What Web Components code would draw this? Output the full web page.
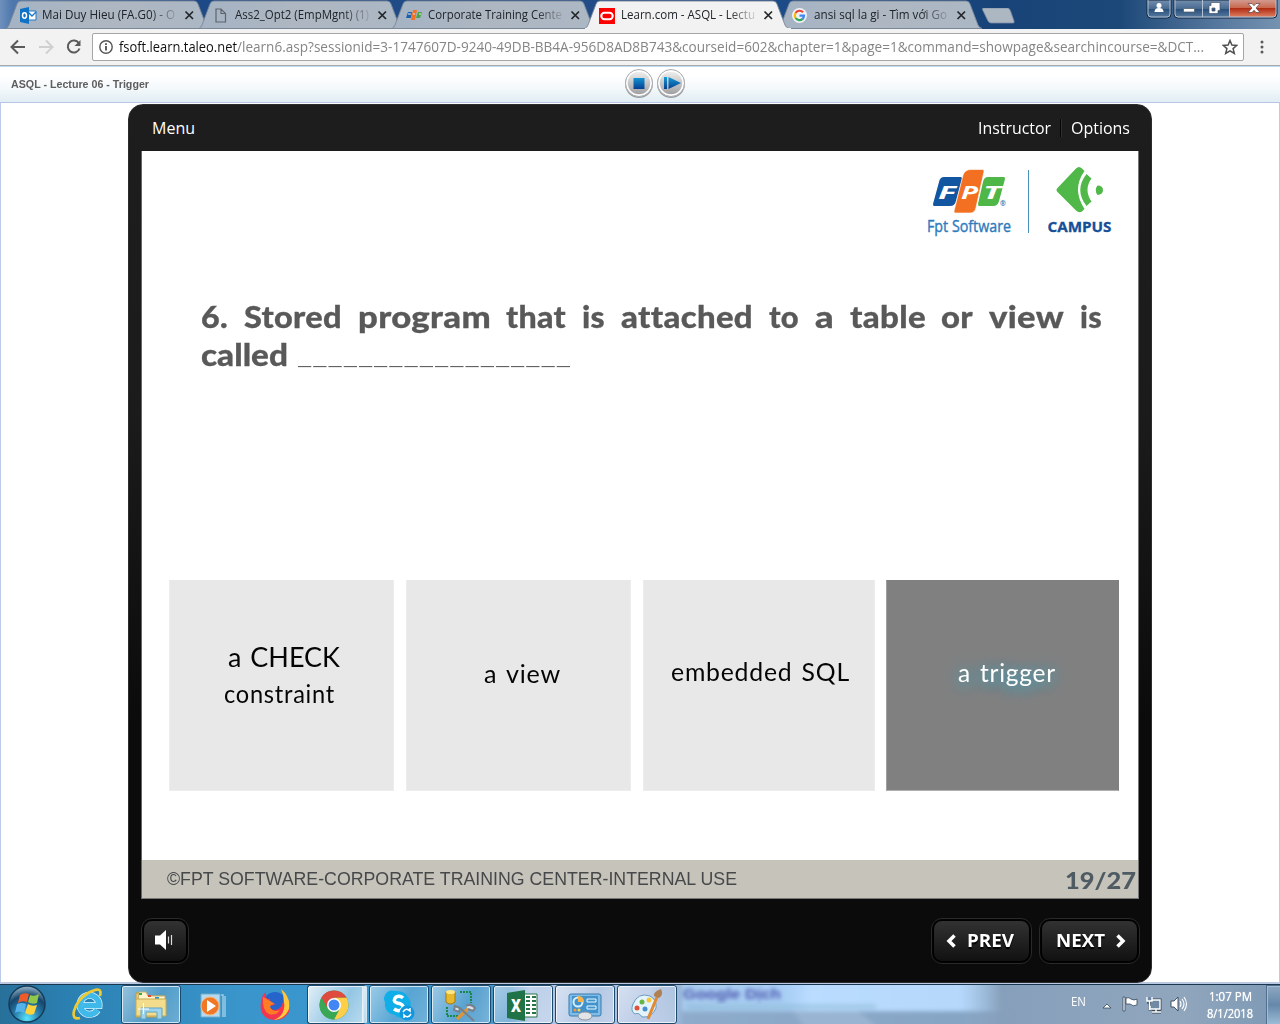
<!DOCTYPE html>
<html lang="en"><head><meta charset="utf-8"><title>ASQL - Lecture 06 - Trigger</title>
<style>
html,body{margin:0;padding:0}
body{width:1280px;height:1024px;overflow:hidden;display:flex;flex-direction:column;background:#fff;font-family:"Open Sans","Noto Sans",sans-serif}
</style></head><body>
<tab-strip>
 <browser-tab icon="outlook"><fit-text w="133">Mai Duy Hieu (FA.G0) - O</fit-text></browser-tab>
 <browser-tab icon="page"><fit-text w="134">Ass2_Opt2 (EmpMgnt) (1)</fit-text></browser-tab>
 <browser-tab icon="fpt"><fit-text w="134">Corporate Training Cente</fit-text></browser-tab>
 <browser-tab icon="oracle" active><fit-text w="134">Learn.com - ASQL - Lectu</fit-text></browser-tab>
 <browser-tab icon="google"><fit-text w="133">ansi sql la gi - Tìm với Go</fit-text></browser-tab>
</tab-strip>
<address-bar></address-bar>
<course-header><fit-text w="138">ASQL - Lecture 06 - Trigger</fit-text></course-header>
<course-player>
 <quiz-slide>
  <answer-card style="width:225px" dx="2"><fit-text w="112" style="font-size:27px;line-height:36px;letter-spacing:0">a CHECK</fit-text><fit-text w="111" style="line-height:36px;margin:0 8px 0 0">constraint</fit-text></answer-card>
  <answer-card style="width:225px;margin-left:12px"><fit-text w="77" style="margin-left:8px;margin-top:-4px">a view</fit-text></answer-card>
  <answer-card style="width:232px;margin-left:12px"><fit-text w="179" style="margin-left:3px;margin-top:-7px">embedded SQL</fit-text></answer-card>
  <answer-card selected style="width:233px;margin-left:11px"><fit-text w="98" style="margin-left:9px;margin-top:-6px">a trigger</fit-text></answer-card>
 </quiz-slide>
</course-player>
<task-bar></task-bar>
<script>
const define=(name,html,after)=>customElements.define(name,class extends HTMLElement{
  connectedCallback(){
    if(this.shadowRoot)return;
    const t=document.createElement('template');
    t.innerHTML=typeof html==='function'?html(this):html;
    this.attachShadow({mode:'open'}).append(t.content.cloneNode(true));
    if(after)after(this);
  }
});
const icons={
outlook:`<svg width="17" height="17" viewBox="0 0 17 17"><path d="M8 4h8v9H8z" fill="#fff" stroke="#1c78c8"/><path d="M8 5l4 4 4-4" fill="none" stroke="#1c78c8" stroke-width="1.4"/><path d="M0 2l9-2v17l-9-2z" fill="#0e72c6"/><ellipse cx="4.500" cy="8.500" rx="2" ry="2.700" fill="none" stroke="#fff" stroke-width="1.500"/></svg>`,
page:`<svg width="17" height="17" viewBox="0 0 17 17"><path d="M3 2h5l4.500 4.500v8.500H3zM8 2v4.500h4.500" fill="none" stroke="#5e646c" stroke-width="1.2"/></svg>`,
fpt:`<svg width="17" height="17" viewBox="0 0 17 17"><path d="M2 5h4l-1 6H0z" fill="#1c62ae"/><path d="M7 3h4l-2 10H5z" fill="#f37028"/><path d="M12 5h4l-2 6h-4z" fill="#4aa644"/><path d="M2 7h3M7 7h2M13 7h2" stroke="#e4e9f0"/></svg>`,
oracle:`<svg width="17" height="17" viewBox="0 0 17 17"><path d="M0 1h16v16H0z" fill="#f00"/><rect x="2.300" y="5.800" width="11.400" height="6.400" rx="3.200" fill="none" stroke="#fff" stroke-width="2"/></svg>`,
google:`<svg width="17" height="17" viewBox="0 0 17 17"><circle cx="7.500" cy="8.500" r="7.500" fill="#eef1f5"/><g fill="none" stroke-width="2.200"><path d="M3.600 6A4.600 4.600 0 0 1 11 5.300" stroke="#ea4335"/><path d="M3.600 6a4.600 4.600 0 0 0 0 5" stroke="#fbbc05"/><path d="M3.600 11a4.600 4.600 0 0 0 7 .9" stroke="#34a853"/><path d="M7.500 8.600h4.500q0 2-1.500 3.500" stroke="#4285f4"/></g></svg>`};

define('tab-strip',`<style>:host{display:flex;height:29px;padding-left:6px;box-sizing:border-box;position:relative;background:linear-gradient(90deg,#6f90bd 0,#4f78ad 12px,#1d4a86 200px,#214c87 600px,#1b4b88 850px,#174378 1000px,#1c4878 1120px,#58799f 1220px,#7592b0 1280px)}
.new{margin:8px 0 0 11px}.win{position:absolute;right:0;top:0}</style><slot></slot>
<svg class="new" width="34" height="16" viewBox="0 0 34 16"><path d="M1.500 0h24q2 0 3 3l3.500 10q.8 2-1 2h-22q-2 0-3-2L.7 2Q0 0 1.500 0z" fill="#adb7c2" stroke="#7b8da4" stroke-width=".8"/></svg>
<svg class="win" width="134" height="19" viewBox="0 0 134 19"><defs><linearGradient id="b" x2="0" y2="1"><stop stop-color="#748faf"/><stop offset=".5" stop-color="#46688f"/><stop offset=".51" stop-color="#284f7b"/><stop offset="1" stop-color="#5b7da1"/></linearGradient><linearGradient id="r" x2="0" y2="1"><stop stop-color="#d29a90"/><stop offset=".45" stop-color="#c9694f"/><stop offset=".5" stop-color="#b02d14"/><stop offset="1" stop-color="#df8063"/></linearGradient></defs>
<path d="M1 0v14q0 4 4 4h16q4 0 4-4V0z" fill="url(#b)" stroke="#15253b"/><path d="M2 0v14q0 3 3 3h16q3 0 3-3V0" fill="none" stroke="#a9bdd3"/>
<path d="M28 0v14q0 4 4 4h95q4 0 4-4V0z" fill="url(#b)" stroke="#15253b"/><path d="M84 0h46v14q0 3-3 3H84z" fill="url(#r)"/><path d="M29 0v14q0 3 3 3h95q3 0 3-3V0M56.500 0v17M83.500 0v17" fill="none" stroke="#b3c2d4"/>
<circle cx="13" cy="5.500" r="2.500" fill="#fff"/><path d="M8.500 12q0-4 4.500-4t4.500 4z" fill="#fff"/>
<path d="M37.500 8.500h11v3.500h-11z" fill="#fff" stroke="#4b5664" stroke-width=".7"/>
<path d="M65 2.500h9v8h-2v3h-9v-8h2zM66 8h3v3h-3z" fill="#fff" stroke="#48566a" stroke-width=".7" fill-rule="evenodd"/>
<path d="M102 3.500h4l2 2.200 2-2.200h4l-4 4.500 4 4.500h-4l-2-2.200-2 2.200h-4l4-4.500z" fill="#fff" stroke="#594044" stroke-width=".7"/></svg>`);

define('browser-tab',h=>`<style>:host{display:flex;position:relative;width:193px;height:29px;align-items:center;box-sizing:border-box;padding-left:14px;font-size:12px;color:#20242a;z-index:0}:host([active]){z-index:1}
.bg{position:absolute;left:0;top:0;z-index:-1}.ic{width:22px;height:17px;margin-top:1px}.t{width:137px;height:18px;line-height:18px;overflow:hidden;margin-top:1px;-webkit-mask-image:linear-gradient(90deg,#000 108px,rgba(0,0,0,.15) 134px)}.x{margin:1px 0 0 4px}svg{display:block}</style>
<svg class="bg" width="206" height="29" viewBox="0 0 206 29"><defs><linearGradient id="g" x2="1"><stop stop-color="#a5b3c4"/><stop offset=".5" stop-color="#aeb7c1"/><stop offset="1" stop-color="#acb7c5"/></linearGradient></defs><path d="M0 28.500Q2 27.500 3 25L11 4q1-3 4-3h173q3 0 4 3l8 21q1 2.500 4 3.500z" fill="${h.hasAttribute('active')?'#f2f2f2':'url(#g)'}" stroke="#7a8796" stroke-width=".9"/>${h.hasAttribute('active')?'<path d="M0 29h206" stroke="#f2f2f2" stroke-width="2"/>':''}</svg>
<div class="ic">${icons[h.getAttribute('icon')]}</div><div class="t"><slot></slot></div><svg class="x" width="12" height="11" viewBox="0 0 12 11"><path d="M2.500 1.500l7.500 7.500M10 1.500L2.500 9" stroke="#22262b" stroke-width="1.700"/></svg>`);

define('address-bar',`<style>:host{display:flex;align-items:center;height:37px;box-sizing:border-box;background:#f2f2f2;border-bottom:1px solid #a9a9ac}
.nav{margin-left:8px}.box{margin-left:8px;width:1150px;height:26px;border:1px solid #a6a6a8;border-radius:2px;background:#fff;display:flex;align-items:center;font-size:14px;line-height:20px;color:#858585}.box svg{flex:none}b{font-weight:400;color:#111}.dots{margin-left:13px}</style>
<svg class="nav" width="76" height="20" viewBox="0 0 76 20"><g fill="none" stroke="#5a5a5a" stroke-width="2"><path d="M17 10H4M10 3.500L3.500 10l6.500 6.500"/><path d="M31 10h13M38 3.500l6.500 6.500-6.500 6.500" stroke="#d0d0d0"/><path d="M71 6.500A6 6 0 1 0 71.500 11.500"/></g><path d="M72.500 3v6h-6z" fill="#5a5a5a"/></svg>
<div class="box"><svg width="26" height="16" viewBox="0 0 26 16"><circle cx="13" cy="8" r="6.200" fill="none" stroke="#555" stroke-width="1.400"/><path d="M13 7v4.500M13 4.300v1.600" stroke="#444" stroke-width="1.700"/></svg><b><fit-text w="118">fsoft.learn.taleo.net</fit-text></b><fit-text w="967">/learn6.asp?sessionid=3-1747607D-9240-49DB-BB4A-956D8AD8B743&amp;courseid=602&amp;chapter=1&amp;page=1&amp;command=showpage&amp;searchincourse=&amp;DCT...</fit-text><svg style="margin-left:18px" width="16" height="16" viewBox="0 0 16 16"><path d="M8 1.500l1.900 4.500 4.900.4-3.700 3.200 1.200 4.800L8 11.800l-4.300 2.600 1.200-4.800L1.200 6.400l4.900-.4z" fill="none" stroke="#4f4f4f" stroke-width="1.500"/></svg></div>
<svg class="dots" width="10" height="16" viewBox="0 0 10 16"><g fill="#5a5a5a"><circle cx="5" cy="3" r="1.500"/><circle cx="5" cy="8" r="1.500"/><circle cx="5" cy="13" r="1.500"/></g></svg>`);

define('course-header',`<style>:host{display:flex;align-items:center;height:37px;box-sizing:border-box;border-top:1px solid #c1dbec;border-bottom:1px solid #b6c6e6;background:linear-gradient(#fff 25%,#f4f9fb 60%,#e1edf4);padding:0 0 2px 11px;font:bold 11px "Liberation Sans",sans-serif;color:#5e5e5e}svg{margin-left:474px}</style><slot></slot>
<svg width="66" height="32" viewBox="0 0 66 32"><defs><linearGradient id="s" x2="0" y2="1"><stop stop-color="#eee"/><stop offset="1" stop-color="#a0a0a3"/></linearGradient><linearGradient id="u" x2="0" y2="1"><stop stop-color="#159bd8"/><stop offset="1" stop-color="#063f91"/></linearGradient></defs>
<g fill="#77797d" opacity=".7"><circle cx="16" cy="16" r="14"/><circle cx="48" cy="16" r="14"/></g><g stroke="#a9abb0" stroke-width="1" fill="#fff"><circle cx="16" cy="15" r="13.500"/><circle cx="48" cy="15" r="13.500"/></g><g fill="url(#s)"><circle cx="16" cy="15" r="11.300"/><circle cx="48" cy="15" r="11.300"/></g><path d="M10.500 10h11v11h-11zM41 9h3v12h-3zM45.500 9L58 15l-12.500 6z" fill="url(#u)"/></svg>`);

define('course-player',`<style>:host{display:flex;justify-content:center;height:881px;box-sizing:border-box;padding-top:1px;border-left:1px solid #bccbe9;border-right:1px solid #bccbe9;border-bottom:2px solid #bbc8e2}
.frame{width:1024px;height:879px;box-sizing:border-box;border:1px solid #2c2c2c;border-radius:15px;background:linear-gradient(#1d1d1d 0,#1b1b1b 35%,#0b0b0b 70%,#0b0b0b);display:flex;flex-direction:column;padding:0 12px}
.top{height:46px;box-sizing:border-box;display:flex;align-items:center;color:#fff;font-size:16px;line-height:24px;padding:0 9px 0 11px}.sp{flex:1}.sep{width:1px;height:18px;background:#050505;border-right:1px solid #303030;margin:0 9px}
.bot{display:flex;padding-top:19px;height:46px}player-button+player-button{margin-left:7px}</style>
<div class="frame"><div class="top"><fit-text w="43">Menu</fit-text><span class="sp"></span><fit-text w="73">Instructor</fit-text><i class="sep"></i><fit-text w="59">Options</fit-text></div>
<slot></slot>
<div class="bot"><player-button style="width:48px"><svg style="margin-right:2px" width="18" height="20" viewBox="0 0 18 20"><path d="M0 5.500h5L11 0v20l-6-5.500H0z" fill="#fff"/><path d="M13.500 6.500v7M16.500 5v10" stroke="#ddd" stroke-width="1.200"/></svg></player-button><span class="sp"></span>
<player-button style="width:101px"><svg style="margin:2px 11px 0 -3px" width="10" height="14" viewBox="0 0 10 14"><path d="M8.500 1.500L3 7l5.500 5.500" fill="none" stroke="#fff" stroke-width="3.500"/></svg><fit-text w="47">PREV</fit-text></player-button>
<player-button style="width:101px;margin-right:-1px"><fit-text w="49" style="margin-left:3px">NEXT</fit-text><svg style="margin:2px 0 0 11px" width="10" height="14" viewBox="0 0 10 14"><path d="M1.500 1.500L7 7l-5.500 5.500" fill="none" stroke="#fff" stroke-width="3.500"/></svg></player-button></div></div>`);

define('player-button',`<style>:host{display:block;height:46px;box-sizing:border-box;border:1px solid #292929;border-radius:11px;padding:1px;background:#030303}div{height:42px;box-sizing:border-box;border:1px solid #000;border-radius:9px;background:linear-gradient(#323232,#111);display:flex;align-items:center;justify-content:center;color:#fff;font-weight:700;font-size:18.500px;line-height:26px;padding-bottom:3px;text-shadow:0 2px 1px #000}</style><div><slot></slot></div>`);

define('quiz-slide',`<style>:host{display:flex;flex-direction:column;width:998px;height:748px;box-sizing:border-box;background:#fff;border-left:1px solid #666;border-bottom:1px solid #777;border-right:1px solid #777;font-family:Lato,sans-serif}
.logo{align-self:flex-end;margin:8px 18px 0 0;height:82px;display:block}.q{margin:56px 0 0 58px;width:902px;color:#595959;font-weight:900;font-size:31px;line-height:38px}.l1{display:flex;justify-content:space-between;padding-left:1px;letter-spacing:.3px;-webkit-text-stroke:.3px #595959}.l2{display:flex;padding-left:1px}.l2 fit-text:first-child{-webkit-text-stroke:.3px #595959}.cards{display:flex;margin:207px 0 0 27px;height:211px}
.foot{margin-top:69px;height:38px;background:#c6c3bb;display:flex;align-items:center;justify-content:space-between;padding:0 2px 0 25px;font:18px "Liberation Sans",sans-serif;color:#47484a}.n{font:900 23px Lato,sans-serif;color:#4f5b62;margin-top:1px}</style>
<svg class="logo" width="202" height="82" viewBox="918 159 202 82"><path d="M944 177h17q1 0 1 2l-6 22q-1 5-6 5h-16q-1 0-1-2l6-22q1-5 5-5z" fill="#1256a2"/><path d="M988 177h16q1 0 1 2l-6 22q-1 5-6 5h-14q-1 0-1-2l5-22q1-5 5-5z" fill="#4fb748"/><path d="M971 169.500h12q1 0 1 2l-8 36q-1 5.500-6 5.500h-15q-1 0-1-2l9-36q2-5.500 8-5.500z" fill="#f37022" stroke="#fff" stroke-width=".6"/>
<g font-family="Open Sans,sans-serif" font-weight="700" font-style="italic" font-size="18" fill="#fff"><text x="938" y="198.500" textLength="18" lengthAdjust="spacingAndGlyphs">F</text><text x="961" y="198.500" textLength="17" lengthAdjust="spacingAndGlyphs">P</text><text x="983" y="198.500" textLength="18" lengthAdjust="spacingAndGlyphs">T</text></g><text x="1000" y="206" font-size="7" font-weight="700" font-family="Open Sans" fill="#2770ae">®</text>
<text x="927" y="232" font-family="Open Sans,sans-serif" font-size="16.500" stroke="#2d7bbd" stroke-width=".4" fill="#2d7bbd" textLength="84" lengthAdjust="spacingAndGlyphs">Fpt Software</text><path d="M1028.500 170v63" stroke="#4a91bd"/>
<g fill="#50b848"><path d="M1057.500 188L1076 168.500q3-3 6 0l2.500 2.500q-13 18 0 38l-2.500 2.500q-3 2-6-1L1057.500 192q-2-2 0-4z"/><path d="M1086.500 174l5 4.500q-8 11 0 23l-5 4.500q-12.500-16 0-32z"/><path d="M1097.500 185.500q5.500 0 5.500 4.500t-5.500 5q-3.500-5 0-9.500z"/></g>
<text x="1047.500" y="232" font-family="Open Sans,sans-serif" font-weight="700" font-size="14.500" stroke="#164f97" stroke-width=".3" fill="#164f97" textLength="64" lengthAdjust="spacingAndGlyphs">CAMPUS</text></svg>
<div class="q"><div class="l1"><fit-text w="27">6.</fit-text><fit-text w="98">Stored</fit-text><fit-text w="133">program</fit-text><fit-text w="60">that</fit-text><fit-text w="23">is</fit-text><fit-text w="132">attached</fit-text><fit-text w="30">to</fit-text><fit-text w="19">a</fit-text><fit-text w="76">table</fit-text><fit-text w="32">or</fit-text><fit-text w="75">view</fit-text><fit-text w="22">is</fit-text></div><div class="l2"><fit-text w="87">called</fit-text><fit-text w="274" style="margin:0 0 0 9px;height:38px;line-height:32px;font-weight:300">__________________</fit-text></div></div>
<div class="cards"><slot></slot></div>
<div class="foot"><fit-text w="570">©FPT SOFTWARE-CORPORATE TRAINING CENTER-INTERNAL USE</fit-text><span class="n"><fit-text w="71">19/27</fit-text></span></div>`);

define('answer-card',`<style>:host{display:flex;flex-direction:column;justify-content:center;align-items:center;height:211px;box-sizing:border-box;padding-bottom:22px;background:#e8e8e8;border:1px solid #ededed;border-top-color:#e8e8e8;color:#050505;font-family:Lato,sans-serif;font-weight:400;font-size:25px;line-height:34px;letter-spacing:.8px;word-spacing:2px}:host([dx]){padding-left:4px}:host([selected]){background:#808080;border-color:#808080 #808080 #b0b0b0 #a0a0a0;color:#fff;text-shadow:0 2px 16px #36a3c0,0 3px 12px #5f909d}</style><slot></slot>`);

define('task-item',`<style>:host{display:flex;width:60px;height:39px;box-sizing:border-box;align-items:center;justify-content:center;flex:none}:host([open]){border:1px solid #1c4a6e;border-radius:3px;box-shadow:inset 0 0 0 1px rgba(255,255,255,.7);background:linear-gradient(120deg,rgba(255,255,255,.5),rgba(255,255,255,.15) 55%,rgba(255,255,255,.28))}:host([focus]){background:linear-gradient(120deg,rgba(255,255,255,.85),rgba(255,255,255,.45) 60%,rgba(255,255,255,.65));border-right:4px double #d6e9f5;padding-right:4px}</style><slot></slot>`);

define('task-bar',`<style>:host{display:flex;position:relative;height:40px;box-sizing:border-box;border-top:1px solid #19384f;overflow:hidden;color:#fff;background:linear-gradient(90deg,#27709a 0,#2a7fb0 60px,#3a95cb 240px,#3997cf 360px,#3c92c8 480px,#5f9fcf 510px,#b4c9e8 530px,#a9c0e0 600px,#b2c4e4 650px,#98b4d6 680px,#90aecf 960px,#869fbb 1000px,#90a6bd 1180px,#7e99b5 1280px)}
.glass{position:absolute;left:678px;top:0}.start{width:57px;margin-right:2px;flex:none}.apps{display:flex;gap:2px;position:relative}.sp{flex:1}.tray{position:relative;display:flex;align-items:center;font-size:12px}.clock{width:50px;margin-left:15px;display:flex;flex-direction:column;align-items:center;line-height:17px;text-shadow:0 0 1px #fff}.peek{width:13px;height:38px;margin-left:11px;margin-right:-1px;border:1px solid #526e8e;box-shadow:inset 1px 1px #a6bdd1;background:linear-gradient(#8ca8c2,#6688aa 50%,#9bbbd6)}</style>
<svg class="glass" width="340" height="40" viewBox="0 0 340 40"><defs><filter id="bl"><feGaussianBlur stdDeviation="2"/></filter><linearGradient id="k"><stop stop-color="#a9cdf0"/><stop offset=".33" stop-color="#a9cff5"/><stop offset=".4" stop-color="#b9dcff"/><stop offset=".87" stop-color="#b5d8fb"/><stop offset="1" stop-color="#b5d8fb" stop-opacity="0"/></linearGradient><linearGradient id="m"><stop stop-color="#8eabcb"/><stop offset=".85" stop-color="#86a4c4"/><stop offset="1" stop-color="#869fbb" stop-opacity="0"/></linearGradient></defs><g filter="url(#bl)"><path d="M4-5H324V26H4z" fill="url(#k)"/><path d="M4 26h330v22H4z" fill="url(#m)"/><path d="M115 26h65l25 20h-75z" fill="#a3bcda" opacity=".6"/><path d="M8 19h190v5H8z" fill="#78a9bd" opacity=".35"/></g><text filter="url(#bl)" x="5" y="14" font-family="Liberation Sans" font-weight="700" font-size="14" fill="#4a55ac" textLength="98" lengthAdjust="spacingAndGlyphs">Google Dịch</text></svg>
<svg class="start" width="57" height="39" viewBox="0 0 57 39"><defs><radialGradient id="o" cy=".9" r=".9"><stop stop-color="#59e6ff"/><stop offset=".4" stop-color="#277ba9"/><stop offset=".7" stop-color="#15466d"/><stop offset="1" stop-color="#9cb8cc"/></radialGradient></defs><circle cx="27" cy="19" r="18" fill="url(#o)" stroke="#173c58" stroke-width="1.500"/><path d="M20 10q4-3 9-1l-2 8q-5-2-9 1z" fill="#ef5b2b"/><path d="M30 10q5 2 9-1l-2 9q-5 2-9-1z" fill="#91c84c"/><path d="M17 19q5-2 9 0l-2 9q-5-3-9 0z" fill="#55b3eb"/><path d="M28 19q4 3 9 1l-3 9q-4 2-9-1z" fill="#ffd13b"/></svg>
<div class="apps">
<task-item><svg width="34" height="34" viewBox="0 0 34 34"><path d="M25.500 22A9.500 9.500 0 1 1 27 17.500H11" fill="none" stroke="#ddf7ff" stroke-width="7"/><path d="M25.500 22A9.500 9.500 0 1 1 27 17.500H11" fill="none" stroke="#3fb9ea" stroke-width="5.600"/><path d="M8 30q-8 2-6-7Q5 12 16 5q15-8 12 3" fill="none" stroke="#efc933" stroke-width="2.700"/></svg></task-item>
<task-item open><svg width="34" height="34" viewBox="0 0 34 34"><path d="M2 5h9l2 3h16v21H2z" fill="#e9cd73" stroke="#bb9d4a"/><path d="M5 4h7l2 4h17v5H4z" fill="#fff5ca" stroke="#c8ae69"/><path d="M5 5h3v2H5z" fill="#3aa647"/><path d="M14 7h3v2h-3z" fill="#e04636"/><path d="M21 9h4v2h-4z" fill="#2799db"/><path d="M2 11h30v17H2z" fill="#f3dd8d" stroke="#c7a950"/><path d="M7 31V20h21v11h-5v-7H12v7z" fill="#9ed5ee" stroke="#5ca4c7"/><path d="M4 21h11M9.500 15v11" stroke="#fff"/></svg></task-item>
<task-item><svg width="32" height="34" viewBox="0 0 32 34"><path d="M4 6h19v23H4z" fill="#b5d9ef" stroke="#70adcd"/><path d="M24 7h2v22M28 8v21" fill="none" stroke="#97cce7" stroke-width="1.500"/><circle cx="13" cy="18" r="9" fill="#ef7725" stroke="#f8b778"/><path d="M10 12l9 6-9 6z" fill="#fff"/></svg></task-item>
<task-item><svg width="32" height="34" viewBox="0 0 32 34"><circle cx="16" cy="16" r="12" fill="#2464cb"/><path d="M4 7Q-3 25 10 31q14 4 20-7 3-12-7-22 3 8 1 12-2 8-9 8-6-1-5-5 4 2 6-1-5 0-5-5Q6 12 7 4z" fill="#f33550"/><path d="M22 1q10 8 8 20-4 10-15 11 12-5 10-18 0-7-3-13z" fill="#ffc83c"/><path d="M4 9l7 4 5 3q-4 0-5 3 3 6 10 3-4 6-11 4Q3 23 4 9z" fill="#ff7c25"/></svg></task-item>
<task-item open focus><svg width="32" height="32" viewBox="0 0 32 32"><circle cx="16" cy="16" r="14.500" fill="#3aa757"/><path d="M3.400 8.800A14.500 14.500 0 0 1 28.600 8.800H16L10 20z" fill="#df4b3f"/><path d="M28.600 8.800A14.500 14.500 0 0 1 16 30.500L22 19 16 8.800z" fill="#fdce48"/><path d="M3.400 8.800A14.500 14.500 0 0 0 16 30.500L21 21 10 20z" fill="#3aa757"/><circle cx="16" cy="16" r="7" fill="#fff"/><circle cx="16" cy="16" r="5.500" fill="#4285f4"/></svg></task-item>
<task-item open><svg width="32" height="34" viewBox="0 0 32 34"><path d="M2 7Q5 1 12 3q9-1 13 6 4 5 2 12 4 9-6 9-7 0-9-3Q1 25 2 14q-2-3 0-7z" fill="#10aee8"/><path d="M20 10q-3-3-7-1-4 4 1 6 7 1 6 5-3 5-9 1" fill="none" stroke="#fff" stroke-width="3.500"/><circle cx="24" cy="25" r="7.500" fill="#1098df"/><path d="M20 24q3-5 7-1v-3M28 26q-3 5-7 1v3" fill="none" stroke="#fff" stroke-width="1.500"/></svg></task-item>
<task-item open><svg width="32" height="34" viewBox="0 0 32 34"><path d="M1 4v10q4 4 9 0V4z" fill="#e7b92f" stroke="#a8780b"/><ellipse cx="5.500" cy="4" rx="4.500" ry="2" fill="#ffe784"/><path d="M15 4h11v11M2 19v9h11" fill="none" stroke="#188747" stroke-width="2" stroke-dasharray="2 1"/><path d="M12 31l13-12" stroke="#dc953a" stroke-width="3.500"/><path d="M15 20l14 13M10 18l5 2-1 4-5-2zM21 18q5-3 9 2l-2 3-5-2" fill="#dce2e8" stroke="#75818c" stroke-width="2"/></svg></task-item>
<task-item open><svg width="34" height="34" viewBox="0 0 34 34"><path d="M17 6h14v23H17z" fill="#fff" stroke="#277346"/><path d="M20 9h4M26 9h4M20 13h4M26 13h4M20 17h4M26 17h4M20 21h4M26 21h4M20 25h4M26 25h4" stroke="#277346" stroke-width="2"/><path d="M1 5l18-3v31L1 30z" fill="#207346"/><text x="5" y="24" font-family="Open Sans" font-weight="800" font-size="17" fill="#fff" textLength="10" lengthAdjust="spacingAndGlyphs">X</text></svg></task-item>
<task-item open><svg width="34" height="34" viewBox="0 0 34 34"><rect x="1" y="6" width="32" height="22" rx="2" fill="#80bce8" stroke="#397aaa"/><path d="M4 8h26v17H4z" fill="#4292cb"/><circle cx="10" cy="14" r="4.500" fill="none" stroke="#d7efff" stroke-width="2"/><path d="M10 14V8q6 0 6 6z" fill="#f7b24a"/><path d="M19 11h9v3h-9zM19 18h9v3h-9z" fill="none" stroke="#e8faff"/><circle cx="7" cy="22" r="1.500" fill="#ff943b"/><circle cx="11" cy="22" r="1.500" fill="#ffd24b"/><ellipse cx="17" cy="28" rx="7" ry="4" fill="#e2e5e8" stroke="#8a969f"/></svg></task-item>
<task-item open><svg width="34" height="34" viewBox="0 0 34 34"><path d="M3 16Q8 4 20 8q7 4 6 12-4 10-14 9-3-5-7-3-5-3-2-10z" fill="#e5f4fb" stroke="#669cc0"/><circle cx="7" cy="20" r="2.500" fill="#df513a"/><circle cx="12" cy="14" r="2.500" fill="#66b645"/><circle cx="19" cy="12" r="2.500" fill="#f7c73a"/><circle cx="15" cy="21" r="2.500" fill="#4790d0"/><path d="M27 9L18 31" stroke="#e18a32" stroke-width="3"/><path d="M24 8q-1-4 7-7 3 6-2 9z" fill="#af8052"/></svg></task-item>
</div><span class="sp"></span><div class="tray"><fit-text w="15" style="margin-top:-6px">EN</fit-text>
<svg style="margin-left:15px" width="89" height="24" viewBox="0 0 89 24"><path d="M2 15l4-4 4 4z" fill="#fff" stroke="#34485b" stroke-width=".8"/><path d="M22 4h2v14h-2zM25 5q3-1 5 1 3 2 6 0v6q-4 2-7-1h-4z" fill="#fff" stroke="#34485b" stroke-width=".8"/><g fill="none" stroke="#34485b" stroke-width="3"><path d="M51 7h8v9H49v-3M51 19h9M55 16v3M48 4v3q-1 4 1 3v7"/></g><g fill="#708aa3" stroke="#fff" stroke-width="1.400"><path d="M51 7h8v9H49v-3M51 19h9M55 16v3M46 4v4h5V4M48.500 8v9"/></g><path d="M70 8h3l4-4v14l-4-4h-3z" fill="#fff" stroke="#34485b" stroke-width=".9"/><path d="M79 8q2 3 0 6M81 6q4 5 0 10M83 4q5 7 0 14" fill="none" stroke="#fff" stroke-width="1.100"/></svg>
<div class="clock"><fit-text w="43">1:07 PM</fit-text><fit-text w="46">8/1/2018</fit-text></div><i class="peek"></i></div>`);

/* Condenses or widens a line of text to the width given in its "w" attribute. */
define('fit-text',`<style>:host{display:block;flex:none;white-space:nowrap}span{display:inline-block;transform-origin:0 50%}</style><span><slot></slot></span>`,el=>{
  const w=+el.getAttribute('w'),s=el.shadowRoot.querySelector('span'),n=s.offsetWidth;
  el.style.width=w+'px';
  if(n)s.style.transform='scaleX('+w/s.getBoundingClientRect().width+')';
});
</script></body></html>
